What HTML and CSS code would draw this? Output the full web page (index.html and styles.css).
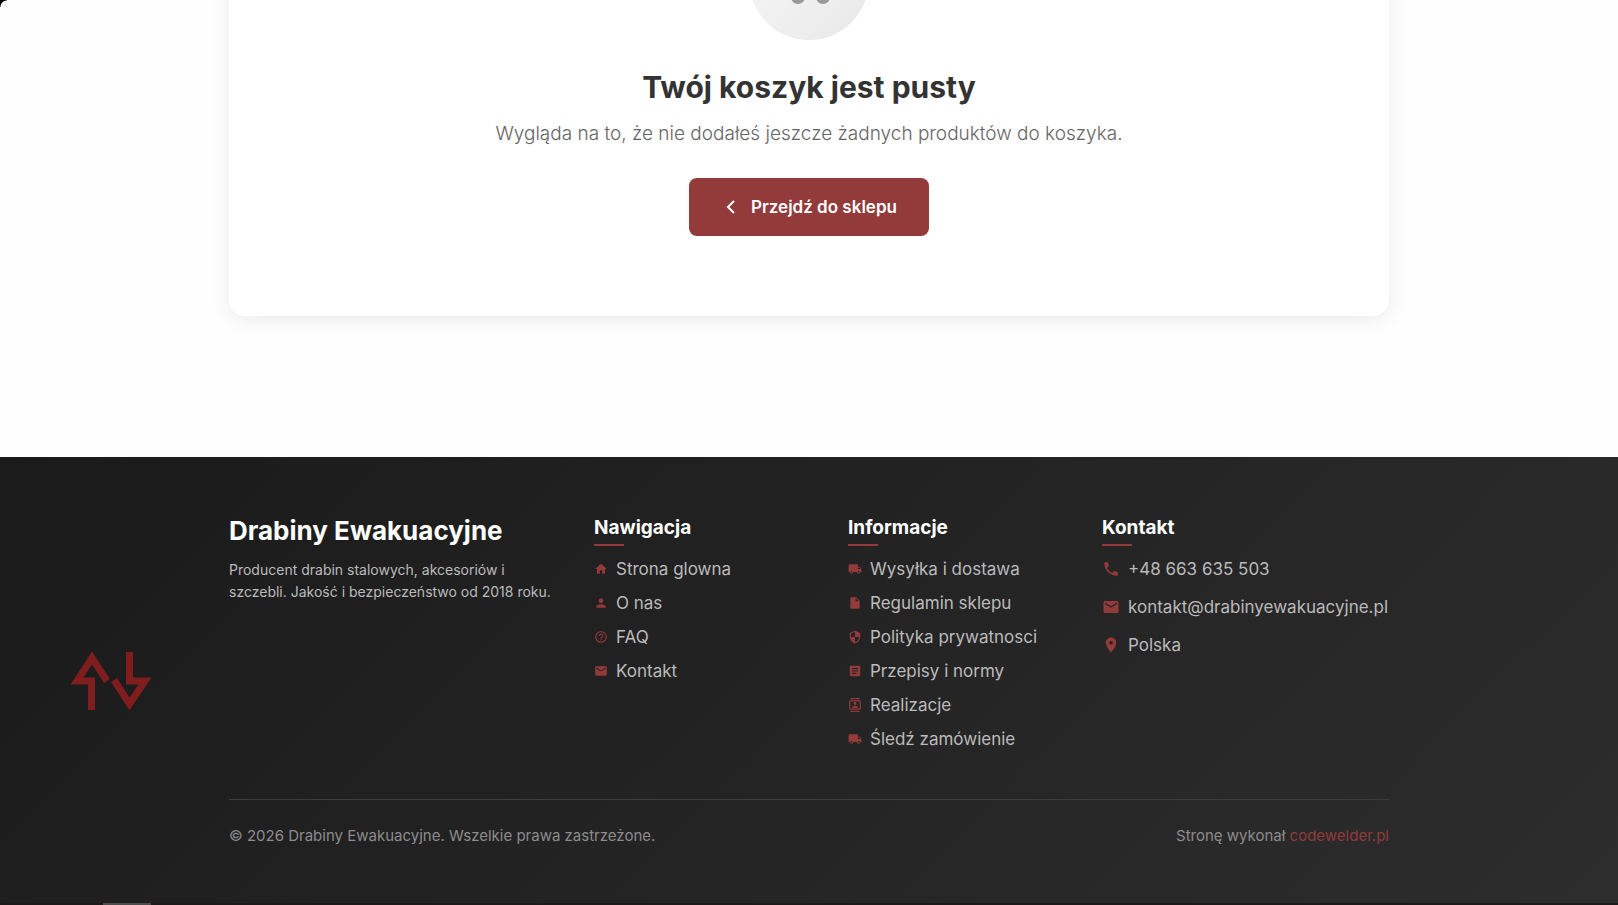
FILE: index.html
```html
<!DOCTYPE html>
<html lang="pl">
<head>
<meta charset="utf-8">
<meta name="viewport" content="width=device-width, initial-scale=1">
<title>Koszyk – Drabiny Ewakuacyjne</title>
<link rel="stylesheet" href="styles.css">
</head>
<body>
<svg class="sprite" aria-hidden="true">
  <symbol id="i-home" viewBox="0 0 24 24"><path d="M10 20v-6h4v6h5v-8h3L12 3 2 12h3v8z"/></symbol>
  <symbol id="i-person" viewBox="0 0 24 24"><path d="M12 12c2.21 0 4-1.79 4-4s-1.790-4-4-4-4 1.790-4 4 1.790 4 4 4m0 2c-2.670 0-8 1.340-8 4v2h16v-2c0-2.660-5.330-4-8-4"/></symbol>
  <symbol id="i-help" viewBox="0 0 24 24"><path d="M11 18h2v-2h-2zm1-16C6.480 2 2 6.480 2 12s4.480 10 10 10 10-4.480 10-10S17.520 2 12 2m0 18c-4.410 0-8-3.590-8-8s3.590-8 8-8 8 3.590 8 8-3.590 8-8 8m0-14c-2.210 0-4 1.790-4 4h2c0-1.100.9-2 2-2s2 .9 2 2c0 2-3 1.750-3 5h2c0-2.250 3-2.500 3-5 0-2.210-1.790-4-4-4"/></symbol>
  <symbol id="i-mail" viewBox="0 0 24 24"><path d="M20 4H4c-1.100 0-1.990.9-1.990 2L2 18c0 1.100.9 2 2 2h16c1.100 0 2-.9 2-2V6c0-1.100-.9-2-2-2m0 4-8 5-8-5V6l8 5 8-5z"/></symbol>
  <symbol id="i-truck" viewBox="0 0 24 24"><path d="M20 8h-3V4H3c-1.100 0-2 .9-2 2v11h2c0 1.660 1.340 3 3 3s3-1.340 3-3h6c0 1.660 1.340 3 3 3s3-1.340 3-3h2v-5zM6 18.500c-.83 0-1.500-.67-1.500-1.500s.67-1.500 1.500-1.500 1.500.67 1.500 1.500-.67 1.500-1.500 1.500m13.500-9 1.960 2.500H17V9.500zm-1.500 9c-.83 0-1.500-.67-1.500-1.500s.67-1.500 1.500-1.500 1.500.67 1.500 1.500-.67 1.500-1.500 1.500"/></symbol>
  <symbol id="i-file" viewBox="0 0 24 24"><path d="M6 2c-1.100 0-1.990.9-1.990 2L4 20c0 1.100.89 2 1.990 2H18c1.100 0 2-.9 2-2V8l-6-6zm7 7V3.500L18.500 9z"/></symbol>
  <symbol id="i-shield" viewBox="0 0 24 24"><path d="M12 1 3 5v6c0 5.550 3.840 10.740 9 12 5.160-1.260 9-6.450 9-12V5zm0 10.990h7c-.53 4.120-3.280 7.790-7 8.940V12H5V6.300l7-3.110z"/></symbol>
  <symbol id="i-article" viewBox="0 0 24 24"><path d="M19 3H5c-1.100 0-2 .9-2 2v14c0 1.100.9 2 2 2h14c1.100 0 2-.9 2-2V5c0-1.100-.9-2-2-2m-5 14H7v-2h7zm3-4H7v-2h10zm0-4H7V7h10z"/></symbol>
  <symbol id="i-contacts" viewBox="0 0 24 24"><path d="M20 4H4c-1.100 0-2 .9-2 2v12c0 1.100.9 2 2 2h16c1.100 0 2-.9 2-2V6c0-1.100-.9-2-2-2m0 14H4V6h16zM4 0h16v2H4zm0 22h16v2H4zm8-10c1.380 0 2.500-1.120 2.500-2.500S13.380 7 12 7 9.500 8.120 9.500 9.500 10.620 12 12 12m5 4.250c0-2.100-3.310-3-5-3s-5 .9-5 3V17h10z"/></symbol>
  <symbol id="i-phone" viewBox="0 0 24 24"><path d="M6.620 10.790c1.440 2.830 3.760 5.140 6.590 6.590l2.200-2.200c.27-.27.67-.36 1.020-.24 1.120.37 2.330.57 3.570.57.55 0 1 .45 1 1V20c0 .55-.45 1-1 1-9.390 0-17-7.610-17-17 0-.55.45-1 1-1h3.500c.55 0 1 .45 1 1 0 1.250.2 2.450.57 3.570.11.35.03.74-.25 1.020z"/></symbol>
  <symbol id="i-pin" viewBox="0 0 24 24"><path d="M12 2C8.130 2 5 5.130 5 9c0 5.250 7 13 7 13s7-7.750 7-13c0-3.870-3.130-7-7-7m0 9.500c-1.380 0-2.500-1.120-2.500-2.500s1.120-2.500 2.500-2.500 2.500 1.120 2.500 2.500-1.120 2.500-2.500 2.500"/></symbol>
</svg>

<main class="page">
  <section class="cart">
    <div class="cart-icon">
      <svg viewBox="0 0 56 56" aria-hidden="true"><circle cx="17" cy="45" r="5"/><circle cx="42" cy="45" r="5"/><path d="M2 4h8l6 30h28l6-24H12"/></svg>
    </div>
    <h1 class="cart-title">Twój koszyk jest pusty</h1>
    <p class="cart-text">Wygląda na to, że nie dodałeś jeszcze żadnych produktów do koszyka.</p>
    <button class="shop-button" type="button">
      <svg viewBox="0 0 24 24" aria-hidden="true"><path d="M15 18l-6-6 6-6"/></svg>
      Przejdź do sklepu
    </button>
  </section>
</main>

<footer class="footer">
  <svg class="footer-logo" viewBox="0 0 80 58" aria-hidden="true"><path d="M20.500 58V29H6L21 6l15 23M58.500 0v29H74L58.500 52 43 28"/></svg>
  <div class="footer-inner">
    <div class="footer-grid">
      <div>
        <h2 class="brand">Drabiny Ewakuacyjne</h2>
        <p class="about">Producent drabin stalowych, akcesoriów i szczebli. Jakość i bezpieczeństwo od 2018 roku.</p>
      </div>
      <nav aria-labelledby="nav-title">
        <h3 class="col-title" id="nav-title">Nawigacja</h3>
        <ul class="links">
          <li><a href="#"><svg><use href="#i-home"/></svg>Strona glowna</a></li>
          <li><a href="#"><svg><use href="#i-person"/></svg>O nas</a></li>
          <li><a href="#"><svg><use href="#i-help"/></svg>FAQ</a></li>
          <li><a href="#"><svg><use href="#i-mail"/></svg>Kontakt</a></li>
        </ul>
      </nav>
      <nav aria-labelledby="info-title">
        <h3 class="col-title" id="info-title">Informacje</h3>
        <ul class="links">
          <li><a href="#"><svg><use href="#i-truck"/></svg>Wysyłka i dostawa</a></li>
          <li><a href="#"><svg><use href="#i-file"/></svg>Regulamin sklepu</a></li>
          <li><a href="#"><svg><use href="#i-shield"/></svg>Polityka prywatnosci</a></li>
          <li><a href="#"><svg><use href="#i-article"/></svg>Przepisy i normy</a></li>
          <li><a href="#"><svg><use href="#i-contacts"/></svg>Realizacje</a></li>
          <li><a href="#"><svg><use href="#i-truck"/></svg>Śledź zamówienie</a></li>
        </ul>
      </nav>
      <div>
        <h3 class="col-title">Kontakt</h3>
        <ul class="links contact">
          <li><a href="tel:+48663635503"><svg><use href="#i-phone"/></svg>+48 663 635 503</a></li>
          <li><a href="mailto:kontakt@drabinyewakuacyjne.pl"><svg><use href="#i-mail"/></svg>kontakt@drabinyewakuacyjne.pl</a></li>
          <li><span><svg><use href="#i-pin"/></svg>Polska</span></li>
        </ul>
      </div>
    </div>
    <div class="footer-bottom">
      <p>© 2026 Drabiny Ewakuacyjne. Wszelkie prawa zastrzeżone.</p>
      <p>Stronę wykonał <a href="#">codewelder.pl</a></p>
    </div>
  </div>
</footer>
<div class="edge-bar"><span></span></div>
<div class="corner"></div>
</body>
</html>
```

FILE: styles.css
```css
* { box-sizing: border-box; }

body {
  margin: 0;
  min-height: 100vh;
  display: flex;
  flex-direction: column;
  overflow: hidden;
  background: #fefefe;
  color: #333;
  font-family: Inter, "Open Sans", sans-serif;
  font-size: 17px;
}

h1, h2, h3, p, ul { margin: 0; padding: 0; }
ul { list-style: none; }
a { color: inherit; text-decoration: none; }
.sprite { position: absolute; width: 0; height: 0; }

.page,
.footer-inner {
  width: 100%;
  max-width: 1200px;
  margin: 0 auto;
  padding: 0 20px;
}

/* Cart card; its upper part is scrolled out of view */
.page { padding-bottom: 141px; }

.cart {
  display: flex;
  flex-direction: column;
  align-items: center;
  margin-top: -160px;
  padding: 80px 32px;
  border-radius: 16px;
  background: #fff;
  box-shadow: 0 4px 20px rgba(0, 0, 0, .08);
  text-align: center;
}

.cart-icon {
  display: flex;
  align-items: center;
  justify-content: center;
  width: 120px;
  height: 120px;
  border-radius: 50%;
  background: linear-gradient(135deg, #f8f8f8, #e8e8e8);
}

.cart-icon svg {
  width: 56px;
  height: 56px;
  fill: none;
  stroke: #999;
  stroke-width: 4;
}

.cart-title {
  margin-top: 24px;
  font-size: 30px;
  font-weight: 700;
  line-height: 46px;
}

.cart-text {
  margin-top: 8px;
  color: #666;
  font-size: 19px;
  font-weight: 300;
  line-height: 32px;
}

.shop-button {
  display: flex;
  align-items: center;
  gap: 8px;
  height: 58px;
  margin-top: 28px;
  padding: 0 32px 0 30px;
  border: 0;
  border-radius: 8px;
  background: #933a3a;
  color: #fff;
  font: 600 17px/26px Inter, "Open Sans", sans-serif;
}

.shop-button svg {
  width: 24px;
  height: 24px;
  fill: none;
  stroke: currentColor;
  stroke-width: 2;
}

.footer {
  position: relative;
  flex: 1;
  padding: 56px 0 54px;
  background: linear-gradient(135deg, #1a1a1a, #2d2d2d);
  color: #bbb;
}

.footer-logo {
  position: absolute;
  top: 50%;
  left: 71px;
  width: 80px;
  height: 58px;
  margin-top: -28px;
  fill: none;
  stroke: #7f1d1f;
  stroke-width: 7;
}

.footer-grid {
  display: grid;
  grid-template-columns: 3fr 2fr 2fr minmax(287px, auto);
  gap: 32px;
}

.brand {
  color: #fff;
  font-size: 26px;
  font-weight: 700;
  line-height: 36px;
}

.about {
  margin-top: 10px;
  font-size: 14px;
  line-height: 22px;
}

.col-title {
  margin-bottom: 10px;
  color: #fff;
  font-size: 19px;
  font-weight: 700;
  line-height: 30px;
}

.col-title::after {
  content: "";
  display: block;
  width: 30px;
  height: 2px;
  margin-top: 1px;
  background: #933a3a;
}

.links {
  display: grid;
  gap: 8px;
  line-height: 26px;
}

.links a,
.links span {
  display: flex;
  align-items: center;
  gap: 8px;
}

.links svg {
  flex: none;
  width: 14px;
  height: 14px;
  fill: #933a3a;
}

.links.contact { gap: 12px; }
.links.contact svg { width: 18px; height: 18px; }

.footer-bottom {
  display: flex;
  justify-content: space-between;
  margin-top: 47px;
  padding-top: 24px;
  border-top: 1px solid #3e3e3e;
  color: #8c8c8c;
  font-size: 15px;
  line-height: 24px;
}

.footer-bottom a { color: #933a3a; }

.edge-bar {
  height: 2px;
  background: #1c191b;
}

.edge-bar span {
  display: block;
  width: 48px;
  height: 2px;
  margin-left: 103px;
  background: #4c4c4c;
}

/* Rounded window corner */
.corner {
  position: absolute;
  top: 0;
  left: 0;
  width: 7px;
  height: 7px;
  background: radial-gradient(circle at 7px 7px, transparent 6px, #0a0408 7px);
}
```
